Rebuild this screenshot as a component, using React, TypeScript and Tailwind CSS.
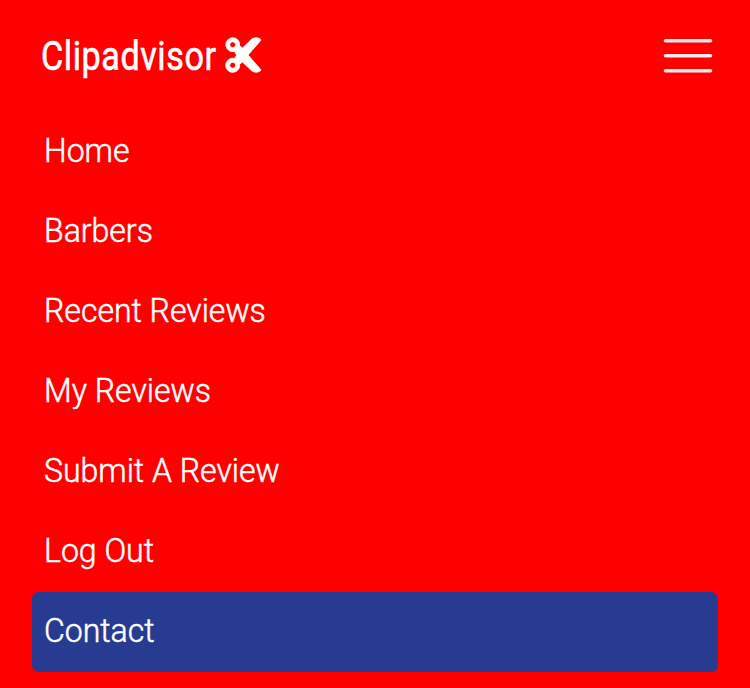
import React from "react";

const links = ["Home", "Barbers", "Recent Reviews", "My Reviews", "Submit A Review", "Log Out", "Contact"];

function Scissors() {
  return (
    <svg className="-mt-0.5 h-9 w-[37px] overflow-visible" viewBox="0 0 37 36" fill="white" stroke="white" strokeWidth="0.9" strokeLinejoin="round" aria-hidden="true">
      <path
        fillRule="evenodd"
        d="M7.7 .7a7 7 0 0 1 6.9 8.2l2.9 2.1 8.4-8.1c3-2.8 7.4-2.5 9.6-.7.5.4.5 1 .1 1.4L23 18l12.6 14.4c.4.4.4 1-.1 1.4-2.2 1.8-6.6 2.1-9.6-.7L17.5 25l-2.9 2.1A7 7 0 1 1 7.7 21.3c.8 0 1.2.1 1.8.2L11.6 18l-2.1-3.5a7 7 0 1 1-1.8-13.8ZM7.7 4.7a3 3 0 1 0 0 6 3 3 0 0 0 0-6Zm0 20.6a3 3 0 1 0 0 6 3 3 0 0 0 0-6Z"
      />
    </svg>
  );
}

export default function App() {
  return (
    <div className="h-[688px] w-[750px] overflow-hidden bg-[#ff0000] px-8 font-['Roboto',sans-serif] text-white">
      <header className="flex h-28 items-center justify-between pr-[5px] pl-[9px]">
        <a className="flex items-center">
          <span className="w-[184px] origin-left scale-x-[0.832] text-[41px] leading-none tracking-[0.7px] whitespace-nowrap [-webkit-text-stroke:0.6px_white]">
            Clipadvisor
          </span>
          <Scissors />
        </a>
        <svg className="-mt-px h-[35px] w-[50px]" viewBox="0 0 50 35" stroke="#ffe8e8" strokeWidth="3.6" strokeLinecap="round" aria-label="Menu">
          <path d="M2.5 2.7h45M2.5 17.7h45M2.5 32.7h45" />
        </svg>
      </header>
      <nav className="flex flex-col">
        {links.map((label) => (
          <a
            key={label}
            className={`flex h-20 items-center rounded-[7px] px-3 pb-[5px] text-[32px] font-light [-webkit-text-stroke:0.5px_white] ${label === "Contact" ? "bg-[#273c90]" : ""}`}
          >
            <span className="scale-y-105">{label}</span>
          </a>
        ))}
      </nav>
    </div>
  );
}
